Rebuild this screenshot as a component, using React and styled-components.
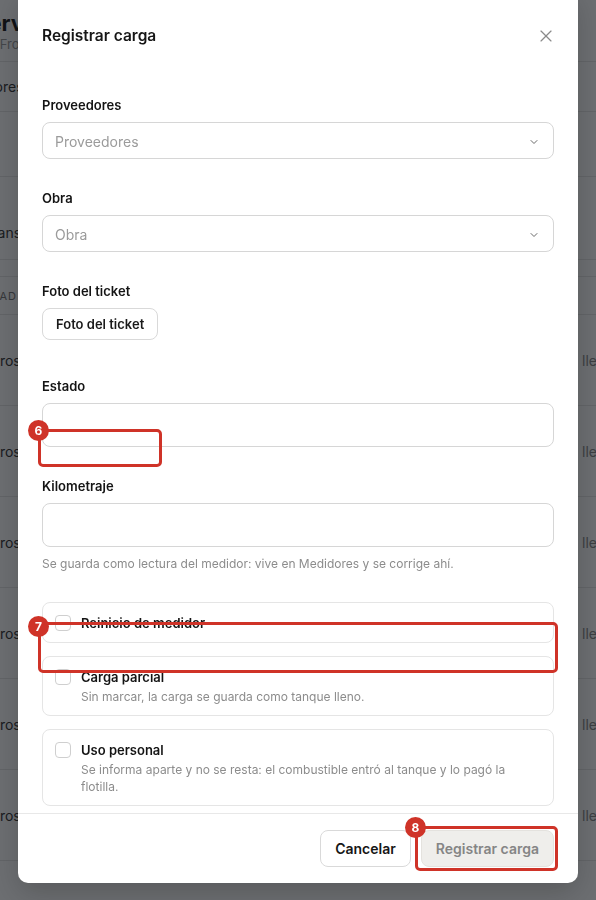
import React from 'react';
import styled, { createGlobalStyle } from 'styled-components';
import { X, ChevronDown } from 'lucide-react';

const GlobalStyle = createGlobalStyle`
  html, body {
    margin: 0;
    padding: 0;
    background: #ffffff;
  }
  body {
    font-family: Inter, "Noto Sans", "Liberation Sans", sans-serif;
    color: #111;
    overflow: hidden;
  }
  * {
    box-sizing: border-box;
  }
`;

/* page behind the dialog */

const Page = styled.div`
  width: calc(100% + 40px);
  margin-left: -16px;
  height: 900px;
  overflow: hidden;
`;

const PageHeader = styled.div`
  height: 62px;
  padding-top: 10px;
  border-bottom: 1px solid #e6e6e6;
`;

const PageTitle = styled.div`
  font-size: 22px;
  font-weight: 700;
  line-height: 26px;
  color: #1a1a1a;
  text-indent: -10px;
`;

const PageSub = styled.div`
  font-size: 13px;
  line-height: 16px;
  color: #9a9a9a;
`;

const Band = styled.div`
  height: ${(p) => p.$h}px;
  display: flex;
  align-items: ${(p) => p.$align || 'center'};
  justify-content: space-between;
  border-bottom: 1px solid #e6e6e6;
  font-size: ${(p) => (p.$head ? 11 : 14)}px;
  letter-spacing: ${(p) => (p.$head ? '0.08em' : '0')};
  color: ${(p) => (p.$head ? '#777' : '#333')};
  padding-bottom: ${(p) => p.$pb || 0}px;
  text-indent: ${(p) => p.$indent || 0}px;
`;

const RightCell = styled.span`
  width: 38px;
  color: #888;
  text-indent: 0;
`;

/* dialog */

const Overlay = styled.div`
  position: fixed;
  inset: 0;
  background: rgba(12, 15, 20, 0.6);
`;

const Dialog = styled.div`
  position: fixed;
  left: 18px;
  right: 18px;
  top: -12px;
  bottom: 17px;
  background: #fff;
  border-radius: 10px;
  display: flex;
  flex-direction: column;
  overflow: hidden;
  box-shadow: 0 10px 30px rgba(0, 0, 0, 0.2);
`;

const Header = styled.div`
  display: flex;
  align-items: center;
  justify-content: space-between;
  padding: 36px 22px 0 24px;
`;

const Title = styled.h2`
  margin: 0;
  font-size: 15.5px;
  line-height: 24px;
  font-weight: 600;
  color: #161616;
`;

const Close = styled.button`
  display: flex;
  border: 0;
  background: none;
  padding: 0;
  color: #8a8a8a;
`;

const Body = styled.div`
  flex: 1;
  overflow: hidden;
  padding: 48px 24px 0;
  display: flex;
  flex-direction: column;
`;

const Field = styled.div`
  display: flex;
  flex-direction: column;
  align-items: flex-start;
  margin-bottom: ${(p) => p.$mb ?? 30}px;
`;

const Label = styled.label`
  font-size: 13px;
  line-height: 18px;
  font-weight: 600;
  color: #141414;
  margin-bottom: 8px;
`;

const Select = styled.div`
  width: 100%;
  height: 37px;
  display: flex;
  align-items: center;
  justify-content: space-between;
  padding: 2px 13px 0 12px;
  border: 1px solid #d6d6d6;
  border-radius: 8px;
  font-size: 14px;
  color: #9b9b9b;
  svg {
    color: #6a6a6a;
  }
`;

const Input = styled.div`
  width: 100%;
  height: 44px;
  border: 1px solid #d6d6d6;
  border-radius: 8px;
`;

const Help = styled.p`
  margin: 9px 0 0;
  font-size: 12px;
  line-height: 16px;
  color: #8c8c8c;
`;

const FileButton = styled.button`
  height: 32px;
  padding: 0 13px;
  border: 1px solid #d9d9d9;
  border-radius: 8px;
  background: #fff;
  font-family: inherit;
  font-size: 13px;
  font-weight: 600;
  color: #1a1a1a;
`;

const Options = styled.div`
  display: flex;
  flex-direction: column;
  gap: 13px;
`;

const Option = styled.div`
  display: flex;
  align-items: flex-start;
  gap: 10px;
  padding: 11px 12px 10px;
  border: 1px solid #e5e5e5;
  border-radius: 8px;
`;

const Check = styled.span`
  flex: none;
  width: 16px;
  height: 16px;
  margin-top: 1px;
  border: 1px solid #cfcfcf;
  border-radius: 4px;
  background: #fff;
`;

const OptionText = styled.div`
  display: flex;
  flex-direction: column;
  gap: 2px;
`;

const OptionTitle = styled.span`
  font-size: 13px;
  line-height: 18px;
  font-weight: 600;
  color: #141414;
`;

const OptionDesc = styled.span`
  font-size: 12px;
  line-height: 17px;
  color: #8c8c8c;
  padding-right: 24px;
`;

const Footer = styled.div`
  display: flex;
  justify-content: flex-end;
  gap: 10px;
  padding: 16px 24px;
  border-top: 1px solid #e8e8e8;
`;

const Button = styled.button`
  height: 37px;
  padding: 0 14px;
  border-radius: 8px;
  font-family: inherit;
  font-size: 14px;
  font-weight: 600;
  border: 1px solid ${(p) => (p.$disabled ? '#e4e2de' : '#d9d9d9')};
  background: ${(p) => (p.$disabled ? '#efeeeb' : '#fff')};
  color: ${(p) => (p.$disabled ? '#858585' : '#161616')};
`;

/* review marks drawn over the dialog */

const Mark = styled.div`
  position: fixed;
  left: ${(p) => p.$x}px;
  top: ${(p) => p.$y}px;
  width: ${(p) => p.$w}px;
  height: ${(p) => p.$h}px;
  border: 3px solid #cf3328;
  border-radius: 5px;
`;

const Badge = styled.span`
  position: absolute;
  left: -13px;
  top: ${(p) => p.$top ?? -12}px;
  width: 21px;
  height: 21px;
  border-radius: 50%;
  background: #cf3328;
  color: #fff;
  font-size: 12px;
  font-weight: 700;
  display: flex;
  align-items: center;
  justify-content: center;
`;

const rows = [0, 1, 2, 3, 4, 5];

const options = [
  { title: 'Reinicio de medidor' },
  { title: 'Carga parcial', desc: 'Sin marcar, la carga se guarda como tanque lleno.' },
  {
    title: 'Uso personal',
    desc: 'Se informa aparte y no se resta: el combustible entró al tanque y lo pagó la flotilla.',
  },
];

export default function App() {
  return (
    <>
      <GlobalStyle />
      <Page>
        <PageHeader>
          <PageTitle>Servicios</PageTitle>
          <PageSub>Al Frontera</PageSub>
        </PageHeader>
        <Band $h={50} $indent={-44}>
          <span>Proveedores</span>
        </Band>
        <Band $h={65} />
        <Band $h={83} $align="flex-end" $pb={18}>
          <span>Transporte</span>
        </Band>
        <Band $h={17} />
        <Band $h={38} $head $indent={-15}>
          <span>UNIDAD</span>
        </Band>
        {rows.map((r) => (
          <Band key={r} $h={91}>
            <span>Litros</span>
            <RightCell>lleno</RightCell>
          </Band>
        ))}
      </Page>

      <Overlay />

      <Dialog>
        <Header>
          <Title>Registrar carga</Title>
          <Close>
            <X size={20} strokeWidth={1.4} />
          </Close>
        </Header>
        <Body>
          <Field>
            <Label>Proveedores</Label>
            <Select>
              Proveedores
              <ChevronDown size={12} strokeWidth={2} />
            </Select>
          </Field>
          <Field>
            <Label>Obra</Label>
            <Select>
              Obra
              <ChevronDown size={12} strokeWidth={2} />
            </Select>
          </Field>
          <Field $mb={37}>
            <Label>Foto del ticket</Label>
            <FileButton>Foto del ticket</FileButton>
          </Field>
          <Field>
            <Label>Estado</Label>
            <Input />
          </Field>
          <Field>
            <Label>Kilometraje</Label>
            <Input />
            <Help>Se guarda como lectura del medidor: vive en Medidores y se corrige ahí.</Help>
          </Field>
          <Options>
            {options.map((o) => (
              <Option key={o.title}>
                <Check />
                <OptionText>
                  <OptionTitle>{o.title}</OptionTitle>
                  {o.desc && <OptionDesc>{o.desc}</OptionDesc>}
                </OptionText>
              </Option>
            ))}
          </Options>
        </Body>
        <Footer>
          <Button>Cancelar</Button>
          <Button $disabled>Registrar carga</Button>
        </Footer>
      </Dialog>

      <Mark $x={38} $y={429} $w={124} $h={38}>
        <Badge>6</Badge>
      </Mark>
      <Mark $x={38} $y={622} $w={520} $h={51}>
        <Badge $top={-9}>7</Badge>
      </Mark>
      <Mark $x={415} $y={826} $w={143} $h={45}>
        <Badge>8</Badge>
      </Mark>
    </>
  );
}
